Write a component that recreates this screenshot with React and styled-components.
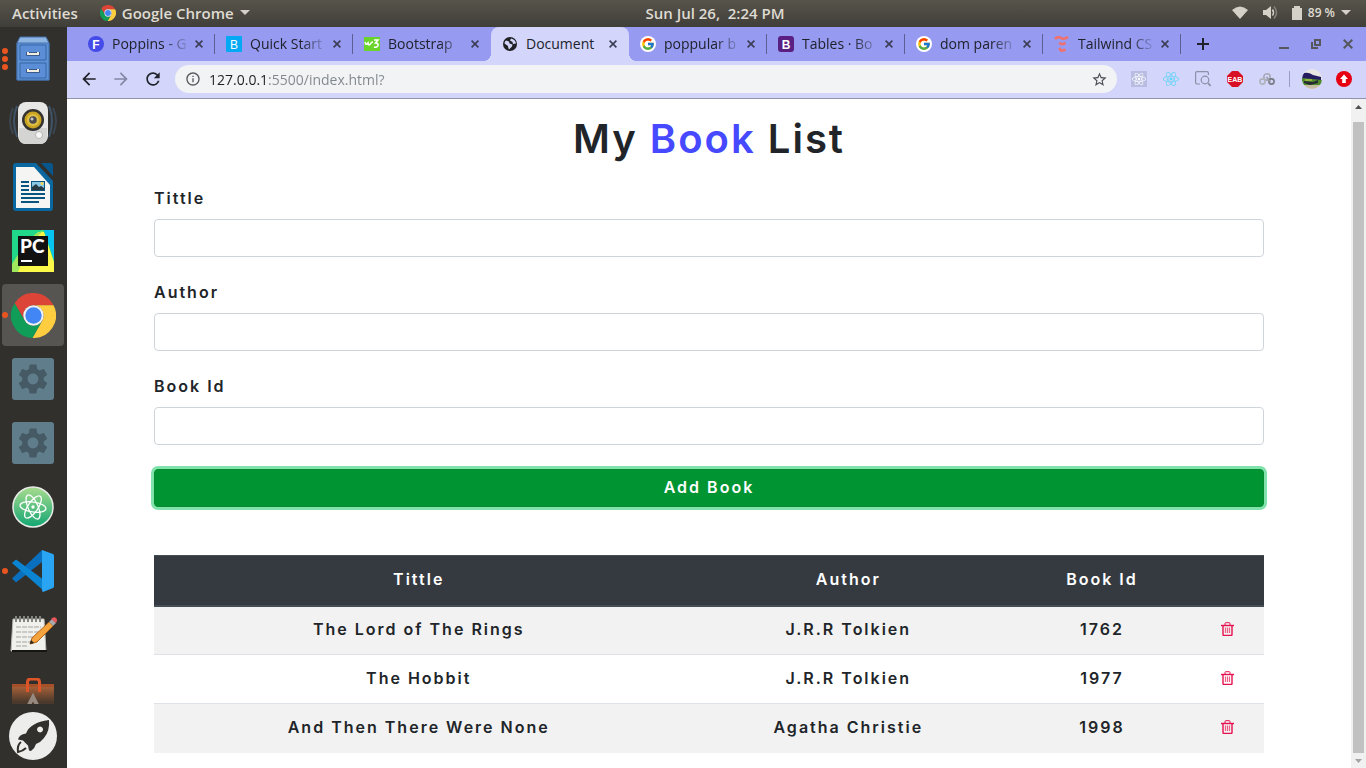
import React from "react";
import styled, { createGlobalStyle } from "styled-components";
import {
  MdArrowBack,
  MdArrowForward,
  MdRefresh,
  MdInfoOutline,
  MdStarBorder,
  MdSettings,
} from "react-icons/md";
import { FcGoogle } from "react-icons/fc";
import { FaReact } from "react-icons/fa";

const Global = createGlobalStyle`
  *, *::before, *::after { box-sizing: border-box; }
  body { margin: 0; background: #fff; }
  button, input { font: inherit; color: inherit; margin: 0; }
  button { border: 0; padding: 0; background: none; cursor: pointer; }
  svg { display: block; flex: none; }
`;

const uiFont = `"Open Sans", "Noto Sans", sans-serif`;

const Desktop = styled.div`
  display: flex;
  flex-direction: column;
  height: 100vh;
  font-family: ${uiFont};
`;

/* ---------- system bar ---------- */

const SystemBar = styled.header`
  display: grid;
  grid-template-columns: 67px 1fr auto 1fr;
  align-items: center;
  flex: none;
  height: 27px;
  padding: 0 15px 2px 12px;
  color: #dfdbd2;
  background: linear-gradient(#57544b, #403e39);
`;

const BarGroup = styled.div`
  display: flex;
  align-items: center;
  grid-column: ${(p) => (p.$end ? "auto" : "span 2")};
  justify-content: ${(p) => (p.$end ? "flex-end" : "flex-start")};
  gap: ${(p) => (p.$end ? 14 : 22)}px;
`;

const BarButton = styled.button`
  display: flex;
  align-items: center;
  gap: 6px;
  font-size: ${(p) => (p.$small ? 12 : 15)}px;
  font-weight: 600;
  line-height: 20px;
  white-space: pre;
`;

/* ---------- dock ---------- */

const Workspace = styled.div`
  display: flex;
  flex: 1;
  min-height: 0;
`;

const Dock = styled.nav`
  display: flex;
  flex-direction: column;
  flex: none;
  width: 67px;
  background: #32302c;
`;

const DockList = styled.div`
  display: flex;
  flex-direction: column;
  flex: 1;
  min-height: 0;
  overflow: hidden;
`;

const DockCell = styled.div`
  display: grid;
  grid-template-columns: 8px 50px;
  align-items: center;
  flex: none;
  height: 64px;
`;

const DockButton = styled.button`
  display: grid;
  place-items: center;
  width: 50px;
  height: 62px;
`;

const ActiveCell = styled(DockCell)`
  width: 62px;
  height: 62px;
  margin: 1px 2px;
  grid-template-columns: 6px 50px;
  border-radius: 4px;
  background: #575551;
`;

const Dots = styled.span`
  display: flex;
  flex-direction: column;
  gap: 2px;
  margin-left: ${(p) => (p.$inset ? 0 : 2)}px;
`;

const Dot = styled.i`
  width: 6px;
  height: 6px;
  border-radius: 50%;
  background: #e95420;
`;

/* ---------- browser chrome ---------- */

const Browser = styled.main`
  display: flex;
  flex-direction: column;
  flex: 1;
  min-width: 0;
`;

const TabStrip = styled.div`
  display: flex;
  flex: none;
  height: 34px;
  padding-left: 10px;
  color: #20222b;
  background: #969af0;
`;

const Tab = styled.div`
  display: flex;
  align-items: center;
  flex: 0 1 138px;
  min-width: 0;
  padding: 0 8px 0 11px;
  position: relative;

  &::after {
    content: "";
    position: absolute;
    right: 0;
    top: 7px;
    width: 1px;
    height: 20px;
    background: ${(p) => (p.$divider ? "#5d5f94" : "transparent")};
  }
`;

const ActiveTab = styled(Tab)`
  background: #d3d5fa;
  border-radius: 8px 8px 0 0;

  &::before {
    content: "";
    position: absolute;
    left: -8px;
    right: -8px;
    bottom: 0;
    height: 8px;
    background:
      radial-gradient(circle at 0 0, transparent 8px, #d3d5fa 8px) left / 8px 8px no-repeat,
      radial-gradient(circle at 100% 0, transparent 8px, #d3d5fa 8px) right / 8px 8px no-repeat;
  }
`;

const TabTitle = styled.span`
  flex: 1;
  min-width: 0;
  margin: 0 1px 0 8px;
  overflow: hidden;
  white-space: nowrap;
  font-size: 14px;
  line-height: 20px;
  mask-image: ${(p) =>
    p.$whole ? "none" : "linear-gradient(90deg, #000 66%, transparent)"};
`;

const IconButton = styled.button`
  display: grid;
  place-items: center;
  flex: none;
  width: ${(p) => p.$size || 32}px;
  height: ${(p) => p.$size || 32}px;
  color: ${(p) => p.$tone || "#20222b"};
`;

const NewTab = styled(IconButton)`
  align-self: center;
  margin-left: 6px;
`;

const WindowControls = styled.div`
  display: flex;
  align-items: center;
  margin-left: auto;
  padding-right: 2px;
`;

const Toolbar = styled.div`
  display: flex;
  align-items: center;
  flex: none;
  height: 38px;
  padding: 0 6px 1px;
  background: #d3d5fa;
  border-bottom: 1px solid #9193ad;
`;

const Omnibox = styled.label`
  display: flex;
  align-items: center;
  flex: 1;
  min-width: 0;
  height: 28px;
  margin: 0 6px;
  padding: 0 2px 0 10px;
  gap: 8px;
  border-radius: 14px;
  color: #55585d;
  background: #f1f3f5;
`;

const Address = styled.input`
  flex: 1;
  min-width: 0;
  height: 24px;
  padding: 0;
  border: 0;
  outline: 0;
  font-size: 14px;
  color: transparent;
  background: linear-gradient(90deg, #202124 60px, #80868b 60px);
  background-clip: text;
  -webkit-background-clip: text;
`;

const Divider = styled.span`
  width: 1px;
  height: 16px;
  margin: 0 6px;
  background: #9a9cc8;
`;

/* ---------- web page ---------- */

const Viewport = styled.div`
  display: flex;
  flex: 1;
  min-height: 0;
  background: #fff;
`;

const Page = styled.div`
  flex: 1;
  min-width: 0;
  overflow: hidden;
  color: #212529;
  font-family: Inter, "Open Sans", sans-serif;
  font-size: 16px;
  font-weight: 600;
  line-height: 22px;
  letter-spacing: 2px;
`;

const Container = styled.div`
  max-width: 1140px;
  margin: 0 auto;
  padding: 16px 15px;
`;

const Title = styled.h1`
  margin: 0 0 24px;
  text-align: center;
  font-size: 40px;
  font-weight: 600;
  line-height: 48px;
`;

const Accent = styled.span`
  color: #4649ff;
`;

const BookForm = styled.form`
  display: flex;
  flex-direction: column;
  gap: 24px;
  margin-bottom: 48px;
`;

const Field = styled.div`
  display: flex;
  flex-direction: column;
  gap: 10px;
`;

const TextBox = styled.input`
  width: 100%;
  height: 38px;
  padding: 6px 12px;
  border: 1px solid #ced4da;
  border-radius: 4px;
  background: #fff;
`;

const SubmitButton = styled.button`
  height: 38px;
  padding-bottom: 2px;
  border: 1px solid #058a31;
  border-radius: 4px;
  color: #fff;
  background: #009432;
  box-shadow: 0 0 0 3px #80e3ab;
  letter-spacing: inherit;
`;

const BookTable = styled.table`
  width: 100%;
  table-layout: fixed;
  border-collapse: collapse;
  text-align: center;
`;

const Column = styled.col`
  width: ${(p) => p.$share}%;
`;

const HeadCell = styled.th`
  height: 50px;
  padding: 0 0 2px;
  border-top: 1px solid #454d55;
  border-bottom: 2px solid #454d55;
  color: #fff;
  background: #343a40;
  font-weight: 600;
`;

const BookRow = styled.tr`
  height: 49px;
  border-top: 1px solid #dee2e6;

  &:nth-child(odd) {
    background: #f2f2f2;
  }
`;

const Cell = styled.td`
  padding: 0 0 2px;
`;

const DeleteButton = styled(IconButton)`
  margin: 0 auto;
`;

const Scrollbar = styled.div`
  display: flex;
  flex-direction: column;
  flex: none;
  width: 15px;
  background: #f1f1f1;
`;

const ScrollThumb = styled.div`
  flex: 1;
  margin: 8px 2px 0;
  background: #c1c1c1;
`;

/* ---------- drawings ---------- */

const Caret = () => (
  <svg width="10" height="6" viewBox="0 0 10 6">
    <path d="M0 0h10L5 5z" fill="#d5d1c8" />
  </svg>
);

const ChromeLogo = ({ size }) => (
  <svg width={size} height={size} viewBox="2 2 44 44">
    <path fill="#db4437" d="M24 14H43.6A22 22 0 0 0 5.54 12L15.34 29A10 10 0 0 1 24 14Z" />
    <path fill="#ffcd40" d="M43.6 14A22 22 0 0 1 22.86 45.97L32.66 29A10 10 0 0 0 24 14Z" />
    <path fill="#0f9d58" d="M5.54 12A22 22 0 0 0 22.86 45.97L32.66 29A10 10 0 0 1 15.34 29Z" />
    <circle cx="24" cy="24" r="10" fill="#f1f1f1" />
    <circle cx="24" cy="24" r="8" fill="#4285f4" />
  </svg>
);

const WifiIcon = () => (
  <svg width="16" height="13" viewBox="0 0 16 13">
    <path d="M0 4Q8-3 16 4L8 13z" fill="#d5d1c8" />
  </svg>
);

const VolumeIcon = () => (
  <svg width="16" height="15" viewBox="0 0 16 15">
    <path d="M1 5h3l5-4v13l-5-4H1z" fill="#d5d1c8" />
    <path d="M10.500 4.500q2 3 0 6" fill="none" stroke="#d5d1c8" strokeWidth="1.500" />
    <path d="M12 1.500q5 6 0 12" fill="none" stroke="#85827b" strokeWidth="1.500" />
  </svg>
);

const BatteryIcon = () => (
  <svg width="10" height="14" viewBox="0 0 10 14">
    <path d="M2 0h6v2h2v12H0V2h2z" fill="#d5d1c8" />
  </svg>
);

const CloseIcon = ({ size = 8, width = 1.6 }) => (
  <svg width={size} height={size} viewBox="0 0 8 8">
    <path d="M.6.6l6.800 6.800M7.400.6L.6 7.400" stroke="currentColor" strokeWidth={width} />
  </svg>
);

const PlusIcon = () => (
  <svg width="12" height="12" viewBox="0 0 12 12">
    <path d="M6 0v12M0 6h12" stroke="currentColor" strokeWidth="2" />
  </svg>
);

const MinimizeIcon = () => (
  <svg width="10" height="12" viewBox="0 0 10 12">
    <path d="M0 10h10" stroke="currentColor" strokeWidth="2" />
  </svg>
);

const RestoreIcon = () => (
  <svg width="10" height="10" viewBox="0 0 10 10" fill="none" stroke="currentColor">
    <path d="M4 1h5v5H4z" strokeWidth="2" />
    <path d="M1 3v6h6" strokeWidth="2" />
  </svg>
);

const LetterBadge = ({ letter, fill, round, weight = 700 }) => (
  <svg width="16" height="16" viewBox="0 0 16 16">
    <rect width="16" height="16" rx={round} fill={fill} />
    <text x="8" y="12.500" textAnchor="middle" fontFamily="Liberation Sans, sans-serif" fontSize="12" fontWeight={weight} fill="#fff">
      {letter}
    </text>
  </svg>
);

const W3Badge = () => (
  <svg width="16" height="16" viewBox="0 0 16 16">
    <rect y="1" width="16" height="14" fill="#6bd42c" />
    <path d="M1 6q1 4 3 1q1 4 3 0q1-1 2-1M10 4h4l-2.500 3q3 0 2.500 2.500q-1 2.500-4 1.500" fill="none" stroke="#fff" strokeWidth="1.600" />
  </svg>
);

const GlobeBadge = () => (
  <svg width="16" height="16" viewBox="0 0 16 16">
    <circle cx="8" cy="8" r="7" fill="#202124" />
    <path d="M2.500 7.500q0-2 1.500-3l3 1 .500 2 3 1-.500 2-3 3q-1-2-1-3.500zM9 2.500l-1 2 2.500 1.500.500 2 3-.500q-.5-4-5-5z" fill="#d3d5fa" />
  </svg>
);

const GoogleBadge = () => (
  <svg width="16" height="16" viewBox="0 0 16 16">
    <circle cx="8" cy="8" r="8" fill="#fff" />
    <FcGoogle x="1" y="1" size={14} />
  </svg>
);

const TailwindBadge = () => (
  <svg width="16" height="16" viewBox="0 0 16 16" fill="none" stroke="#f2706b" strokeWidth="2.600">
    <path d="M1 3q3-3 6-1t7-1" />
    <path d="M5.500 6.500q1 2 3 1.500t3-1" />
    <path d="M5.500 12q1 3 3 2.500t3-1" />
  </svg>
);

const ReactTile = () => (
  <svg width="16" height="16" viewBox="0 0 16 16">
    <rect width="16" height="16" fill="#b9bde2" />
    <FaReact x="1" y="1" size={14} color="#fff" />
  </svg>
);

const InspectIcon = () => (
  <svg width="16" height="16" viewBox="0 0 16 16" fill="none" stroke="#8d90a8" strokeWidth="1.200">
    <path d="M5 13H2q-1.400 0-1.400-1.400V2Q.6.6 2 .6h10q1.400 0 1.400 1.400v2" />
    <circle cx="10" cy="9" r="3.800" />
    <path d="M13 12l2.600 3" strokeWidth="1.800" />
  </svg>
);

const StopIcon = () => (
  <svg width="16" height="16" viewBox="0 0 16 16">
    <path d="M5 0h6l5 5v6l-5 5H5l-5-5V5z" fill="#d80f24" />
    <text x="8" y="10.500" textAnchor="middle" fontFamily="Liberation Sans, sans-serif" fontSize="7" fontWeight="700" fill="#fff">
      EAB
    </text>
  </svg>
);

const RingsIcon = () => (
  <svg width="16" height="12" viewBox="0 0 16 12" fill="none" strokeWidth="1.600">
    <circle cx="8" cy="4" r="3.200" stroke="#a6a8b4" />
    <circle cx="3.500" cy="8.500" r="2.600" stroke="#b0b2bc" />
    <circle cx="12.500" cy="8.500" r="2.600" stroke="#777983" />
    <path d="M7.500 4l4 5" stroke="#969aa2" />
  </svg>
);

const AvatarIcon = () => (
  <svg width="20" height="20" viewBox="0 0 20 20">
    <clipPath id="avatar">
      <circle cx="10" cy="10" r="10" />
    </clipPath>
    <g clipPath="url(#avatar)">
      <rect width="20" height="20" fill="#e8e6e2" />
      <path d="M0 5q5-3 11 1l8 2v4H0z" fill="#241c5e" />
      <path d="M0 9l10 1 10 1v5H0z" fill="#4f8a2c" />
      <path d="M2 12l9 1 5-2v3l-8 2-6-2z" fill="#252a36" />
      <path d="M3 10h7v2H3z" fill="#93b43a" />
      <path d="M0 16h20v4H0z" fill="#c7bda3" />
    </g>
  </svg>
);

const UpdateIcon = () => (
  <svg width="16" height="16" viewBox="0 0 16 16">
    <circle cx="8" cy="8" r="8" fill="#e60012" />
    <path d="M8 3.500l4 4.500H9.800v4H6.200V8H4z" fill="#fff" />
  </svg>
);

const TrashIcon = () => (
  <svg width="13" height="14" viewBox="0 0 13 14" fill="none" stroke="#e6104f">
    <path d="M4 3V1.500q0-.8.8-.8h3.400q.8 0 .8.8V3" />
    <path d="M0 3.500h13" strokeWidth="1.400" />
    <path d="M2 3.500v9q0 1 1 1h7q1 0 1-1v-9" strokeWidth="1.400" />
    <path d="M4.500 5.500v5.500M6.500 5.500v5.500M8.500 5.500v5.500" stroke="#ee5f83" strokeWidth="1.200" />
  </svg>
);

const ScrollArrow = ({ down }) => (
  <svg width="15" height="15" viewBox="0 0 15 15">
    <path d={down ? "M4 6h7l-3.500 4z" : "M4 10h7L7.500 6z"} fill={down ? "#a3a3a3" : "#505050"} />
  </svg>
);

const FilesIcon = () => (
  <svg width="34" height="46" viewBox="0 0 34 46">
    <path d="M4 1h26l3 6v37H1V7z" fill="#8fb5e2" stroke="#4371ac" />
    <path d="M1 7h32v37H1z" fill="#5f91d5" stroke="#4473b0" />
    <path d="M4 9h26v15H4zM4 27h26v15H4z" fill="#5b8ed6" stroke="#3567a8" />
    <path d="M12 16v2h10v-2M12 33v2h10v-2" fill="none" stroke="#2f4a6d" strokeWidth="3.500" />
    <path d="M12 16v2h10v-2M12 33v2h10v-2" fill="none" stroke="#f0ece2" strokeWidth="2" />
  </svg>
);

const SpeakerIcon = () => (
  <svg width="50" height="46" viewBox="0 0 50 46">
    <g fill="none" stroke="#3f5369" strokeWidth="2">
      <path d="M9 6Q3 20 9 37M41 6q6 14 0 31" />
      <path d="M5 8q-6 13 0 26M45 8q6 13 0 26" opacity=".6" />
    </g>
    <rect x="10" y="2" width="30" height="42" rx="8" fill="#e7e7e5" />
    <path d="M11 28h28v9q0 7-7 7H18q-7 0-7-7z" fill="#d4d4d2" />
    <circle cx="25" cy="20" r="11" fill="#34332f" />
    <circle cx="25" cy="20" r="8.500" fill="#c9a322" />
    <circle cx="25" cy="20" r="6" fill="#e0bf47" />
    <circle cx="25" cy="20" r="3.800" fill="#4b4a4a" />
    <circle cx="24" cy="19" r="1.500" fill="#c9cacd" />
    <circle cx="31" cy="35" r="3.500" fill="#f7f7f7" stroke="#b8b8b8" />
  </svg>
);

const WriterIcon = () => (
  <svg width="40" height="48" viewBox="0 0 40 48">
    <path d="M3 0h20l17 18v27q0 3-3 3H3q-3 0-3-3V3q0-3 3-3z" fill="#0b67a0" />
    <path d="M28 0h9q3 0 3 3v10z" fill="#07578c" />
    <path d="M3 4h18l16 18v23H3z" fill="#f5f5f3" />
    <path d="M8 19h8M8 23h8M8 27h8M8 31h24M8 35h24M8 39h18" stroke="#08557f" strokeWidth="2" />
    <rect x="18.500" y="18.500" width="13" height="9" fill="#88c9e8" stroke="#08557f" />
    <path d="M19 27v-3l4-3 3 3 2-1 3 2v2z" fill="#283b42" />
    <circle cx="29" cy="20.500" r="1.500" fill="#f6d34d" />
  </svg>
);

const PyCharmIcon = () => (
  <svg width="42" height="42" viewBox="0 0 42 42">
    <rect width="42" height="42" fill="#21d789" />
    <path d="M32 0h10v30z" fill="#07c3f2" />
    <path d="M0 42L26 2h6l10 30v10z" fill="#fcf84a" />
    <path d="M0 34L18 6 32 0 18 14 6 42H0z" fill="#9fe75d" />
    <path d="M0 0h28L0 25z" fill="#21d789" />
    <rect x="6" y="6" width="30" height="30" fill="#111" />
    <text x="8" y="23" fontFamily="Lato, sans-serif" fontSize="19" fontWeight="900" fill="#fff">
      PC
    </text>
    <path d="M9 31h11" stroke="#fff" strokeWidth="2" />
  </svg>
);

const GearTile = () => (
  <svg width="42" height="42" viewBox="0 0 42 42">
    <rect width="42" height="42" rx="3" fill="#607d8b" />
    <MdSettings x="3" y="3" size={36} color="#455a64" />
  </svg>
);

const AtomIcon = () => (
  <svg width="42" height="42" viewBox="0 0 42 42">
    <linearGradient id="atom" x2="0" y2="1">
      <stop stopColor="#a9dc8e" />
      <stop offset="1" stopColor="#12a673" />
    </linearGradient>
    <circle cx="21" cy="21" r="20" fill="url(#atom)" stroke="#e9ece9" strokeWidth="1.500" />
    <g fill="none" stroke="#fff" strokeWidth="1.300">
      <ellipse cx="21" cy="21" rx="13" ry="5" transform="rotate(8 21 21)" />
      <ellipse cx="21" cy="21" rx="13" ry="5" transform="rotate(66 21 21)" />
      <ellipse cx="21" cy="21" rx="13" ry="5" transform="rotate(124 21 21)" />
    </g>
    <circle cx="21" cy="21" r="1.700" fill="#fff" />
  </svg>
);

const CodeIcon = () => (
  <svg width="42" height="42" viewBox="0 0 42 42">
    <path d="M0 28.500L30 0v12L4 32.500z" fill="#0a6fbd" />
    <path d="M0 13L4 9.500 32 30v11z" fill="#0b84d2" />
    <path d="M30 0l11 4q1 .5 1 2v30q0 1.500-1 2l-10 4q-1-.5-1-2z" fill="#2aa5f4" />
  </svg>
);

const NotesIcon = () => (
  <svg width="48" height="40" viewBox="0 0 48 40">
    <path d="M4 4h31l2 32H2z" fill="#f0f0ec" stroke="#bcbcb6" />
    <path d="M3 36h35" stroke="#16150f" strokeWidth="2" />
    <path d="M7 1v6M11 1v6M15 1v6M19 1v6M23 1v6M27 1v6M31 1v6" stroke="#85857f" strokeWidth="2" />
    <path d="M7 12h25M7 17h23M7 22h18M7 27h16M7 31h12" stroke="#a3a39f" strokeDasharray="5 1" />
    <path d="M21 29l2-6L40 7l4 4-16 16z" fill="#f5a33c" stroke="#b0641b" />
    <path d="M40 7l3-3 4 4-3 3z" fill="#a7a9ac" />
    <path d="M42 4q3-3 5-1t0 5z" fill="#e8585c" />
    <path d="M21 29l1-4 3 3z" fill="#222" />
  </svg>
);

const BriefcaseIcon = () => (
  <svg width="42" height="42" viewBox="0 0 42 42">
    <linearGradient id="case" x2="0" y2="1">
      <stop stopColor="#b5683a" />
      <stop offset=".6" stopColor="#4a382c" />
    </linearGradient>
    <path d="M0 6h42v30H0z" fill="url(#case)" />
    <path d="M0 6h42v3H0z" fill="#a6502a" />
    <path d="M15.500 14V4q0-3 3-3h6q3 0 3 3v10" fill="none" stroke="#dd5426" strokeWidth="3" />
    <path d="M17 27l4-8 4 8" fill="none" stroke="#96897f" strokeWidth="4" />
  </svg>
);

const RocketIcon = () => (
  <svg width="48" height="48" viewBox="0 0 48 48">
    <circle cx="24" cy="24" r="24" fill="#ededeb" />
    <path
      d="M40 8q1 11-5 18-3 4-8 6-1 4-5 7l-2-.5-1-5-5-5-5-1q1-5 8-6 4-11 23-13.500zM31 14.500a3 3 0 1 0 .1 0z"
      fill="#32302c"
    />
    <path d="M12 30q-4 3-3 10 5-1 8-4" fill="none" stroke="#32302c" strokeWidth="2" />
  </svg>
);

/* ---------- content ---------- */

const dockApps = [
  { name: "Files", icon: <FilesIcon />, windows: 3 },
  { name: "Rhythmbox", icon: <SpeakerIcon /> },
  { name: "Writer", icon: <WriterIcon /> },
  { name: "PyCharm", icon: <PyCharmIcon /> },
  { name: "Google Chrome", icon: <ChromeLogo size={45} />, windows: 1, active: true },
  { name: "Service", icon: <GearTile /> },
  { name: "Service 2", icon: <GearTile /> },
  { name: "Atom", icon: <AtomIcon /> },
  { name: "Visual Studio Code", icon: <CodeIcon />, windows: 1 },
  { name: "Text Editor", icon: <NotesIcon /> },
  { name: "Software", icon: <BriefcaseIcon /> },
];

const tabs = [
  { title: "Poppins - G", icon: <LetterBadge letter="F" fill="#444be8" round="8" />, divider: true },
  { title: "Quick Start", icon: <LetterBadge letter="B" fill="#03a9f4" round="1" weight={400} />, divider: true },
  { title: "Bootstrap", icon: <W3Badge /> },
  { title: "Document", icon: <GlobeBadge />, active: true },
  { title: "poppular b", icon: <GoogleBadge />, divider: true },
  { title: "Tables · Bo", icon: <LetterBadge letter="B" fill="#5a1f82" round="3" />, divider: true },
  { title: "dom paren", icon: <GoogleBadge />, divider: true },
  { title: "Tailwind CS", icon: <TailwindBadge />, divider: true },
];

const extensions = [
  { name: "React tools", icon: <ReactTile /> },
  { name: "React", icon: <FaReact size={16} color="#61d3f8" /> },
  { name: "Inspect", icon: <InspectIcon /> },
  { name: "Blocker", icon: <StopIcon /> },
  { name: "Links", icon: <RingsIcon /> },
];

const fields = [
  { id: "title", label: "Tittle" },
  { id: "author", label: "Author" },
  { id: "book-id", label: "Book Id" },
];

const books = [
  { title: "The Lord of The Rings", author: "J.R.R Tolkien", id: "1762" },
  { title: "The Hobbit", author: "J.R.R Tolkien", id: "1977" },
  { title: "And Then There Were None", author: "Agatha Christie", id: "1998" },
];

function DockItem({ name, icon, windows = 0, active }) {
  const Shell = active ? ActiveCell : DockCell;
  return (
    <Shell>
      <Dots $inset={active}>
        {Array.from({ length: windows }, (_, i) => (
          <Dot key={i} />
        ))}
      </Dots>
      <DockButton aria-label={name}>{icon}</DockButton>
    </Shell>
  );
}

function BrowserTab({ title, icon, active, divider }) {
  const Shell = active ? ActiveTab : Tab;
  return (
    <Shell $divider={divider}>
      {icon}
      <TabTitle $whole={active}>{title}</TabTitle>
      <IconButton $size={16} $tone="#3c3e55" aria-label={`Close ${title}`}>
        <CloseIcon />
      </IconButton>
    </Shell>
  );
}

export default function App() {
  return (
    <Desktop>
      <Global />
      <SystemBar>
        <BarGroup>
          <BarButton>Activities</BarButton>
          <BarButton>
            <ChromeLogo size={16} />
            Google Chrome
            <Caret />
          </BarButton>
        </BarGroup>
        <BarButton>Sun Jul 26,  2:24 PM</BarButton>
        <BarGroup $end>
          <WifiIcon />
          <VolumeIcon />
          <BarButton $small>
            <BatteryIcon />
            89 %
            <Caret />
          </BarButton>
        </BarGroup>
      </SystemBar>

      <Workspace>
        <Dock aria-label="Dock">
          <DockList>
            {dockApps.map((app) => (
              <DockItem key={app.name} {...app} />
            ))}
          </DockList>
          <DockItem name="Show applications" icon={<RocketIcon />} />
        </Dock>

        <Browser>
          <TabStrip>
            {tabs.map((tab) => (
              <BrowserTab key={tab.title} {...tab} />
            ))}
            <NewTab aria-label="New tab">
              <PlusIcon />
            </NewTab>
            <WindowControls>
              <IconButton $tone="#55575c" aria-label="Minimize">
                <MinimizeIcon />
              </IconButton>
              <IconButton $tone="#55575c" aria-label="Restore">
                <RestoreIcon />
              </IconButton>
              <IconButton $tone="#55575c" aria-label="Close window">
                <CloseIcon size={10} />
              </IconButton>
            </WindowControls>
          </TabStrip>

          <Toolbar>
            <IconButton aria-label="Back">
              <MdArrowBack size={20} />
            </IconButton>
            <IconButton $tone="#8587a5" aria-label="Forward">
              <MdArrowForward size={20} />
            </IconButton>
            <IconButton aria-label="Reload">
              <MdRefresh size={20} />
            </IconButton>
            <Omnibox>
              <MdInfoOutline size={16} />
              <Address aria-label="Address" defaultValue="127.0.0.1:5500/index.html?" />
              <IconButton $tone="#4b4e55" aria-label="Bookmark this page">
                <MdStarBorder size={17} />
              </IconButton>
            </Omnibox>
            {extensions.map((ext) => (
              <IconButton key={ext.name} aria-label={ext.name}>
                {ext.icon}
              </IconButton>
            ))}
            <Divider />
            <IconButton aria-label="Profile">
              <AvatarIcon />
            </IconButton>
            <IconButton aria-label="Update">
              <UpdateIcon />
            </IconButton>
          </Toolbar>

          <Viewport>
            <Page>
              <Container>
                <Title>
                  My <Accent>Book</Accent> List
                </Title>
                <BookForm onSubmit={(e) => e.preventDefault()}>
                  {fields.map((field) => (
                    <Field key={field.id}>
                      <label htmlFor={field.id}>{field.label}</label>
                      <TextBox id={field.id} type="text" />
                    </Field>
                  ))}
                  <SubmitButton type="submit">Add Book</SubmitButton>
                </BookForm>
                <BookTable>
                  <colgroup>
                    <Column $share={47.7} />
                    <Column $share={29.7} />
                    <Column $share={16} />
                    <Column $share={6.6} />
                  </colgroup>
                  <thead>
                    <tr>
                      <HeadCell>Tittle</HeadCell>
                      <HeadCell>Author</HeadCell>
                      <HeadCell>Book Id</HeadCell>
                      <HeadCell />
                    </tr>
                  </thead>
                  <tbody>
                    {books.map((book) => (
                      <BookRow key={book.id}>
                        <Cell>{book.title}</Cell>
                        <Cell>{book.author}</Cell>
                        <Cell>{book.id}</Cell>
                        <Cell>
                          <DeleteButton aria-label={`Delete ${book.title}`}>
                            <TrashIcon />
                          </DeleteButton>
                        </Cell>
                      </BookRow>
                    ))}
                  </tbody>
                </BookTable>
              </Container>
            </Page>
            <Scrollbar aria-hidden="true">
              <ScrollArrow />
              <ScrollThumb />
              <ScrollArrow down />
            </Scrollbar>
          </Viewport>
        </Browser>
      </Workspace>
    </Desktop>
  );
}
